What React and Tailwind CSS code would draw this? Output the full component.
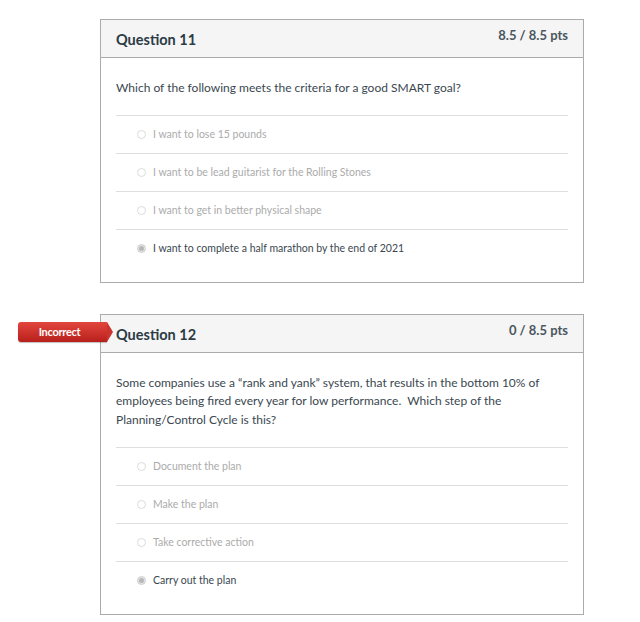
const questions = [
  {
    number: 11,
    score: '8.5 / 8.5 pts',
    text: ['Which of the following meets the criteria for a good SMART goal?'],
    answers: [
      'I want to lose 15 pounds',
      'I want to be lead guitarist for the Rolling Stones',
      'I want to get in better physical shape',
      'I want to complete a half marathon by the end of 2021',
    ],
    selected: 3,
    incorrect: false,
  },
  {
    number: 12,
    score: '0 / 8.5 pts',
    text: [
      'Some companies use a \u201crank and yank\u201d system, that results in the bottom 10% of',
      'employees being fired every year for low performance.\u00a0 Which step of the',
      'Planning/Control Cycle is this?',
    ],
    answers: ['Document the plan', 'Make the plan', 'Take corrective action', 'Carry out the plan'],
    selected: 3,
    incorrect: true,
  },
]

function Radio({ checked }) {
  return checked ? (
    <span className="w-[9px] h-[9px] rounded-full bg-[#e4e4e4] border border-[#d0d0d0] flex items-center justify-center flex-shrink-0">
      <span className="w-[5px] h-[5px] rounded-full bg-[#b8b8b8]" />
    </span>
  ) : (
    <span className="w-[9px] h-[9px] rounded-full border border-[#dcdcdc] bg-white flex-shrink-0" />
  )
}

function QuestionCard({ q }) {
  return (
    <div className="relative w-[484px] border border-[#ababab] bg-white">
      {q.incorrect && (
        <div className="absolute left-[-83px] top-[7px] flex items-center h-[20px]">
          <div className="w-[89px] h-[20px] rounded-l-[3px] bg-gradient-to-b from-[#e2453e] to-[#b91f1a] text-white text-[11px] font-bold tracking-[-0.3px] flex items-center justify-center pr-[6px] shadow-[0_1px_1px_rgba(0,0,0,0.25)]">
            Incorrect
          </div>
          <div className="w-0 h-0 border-y-[10px] border-y-transparent border-l-[6px] border-l-[#cc332d]" />
        </div>
      )}
      <div className="h-[38px] bg-[#f5f5f5] border-b border-[#ababab] flex justify-between pl-[15px] pr-[15px]">
        <span className="pt-[10px] text-[14.5px] font-bold text-[#2d3b45] leading-[20px]">Question {q.number}</span>
        <span className="pt-[6px] text-[13px] font-bold text-[#4b565e] leading-[18px]">{q.score}</span>
      </div>
      <div className="px-[15px] pt-[20.5px] pb-[15px]">
        <div className="text-[12px] leading-[18.5px] text-[#3a4750] pb-[18px]">
          {q.text.map((line) => (
            <div key={line}>{line}</div>
          ))}
        </div>
        {q.answers.map((a, i) => (
          <div key={a} className="h-[38px] border-t border-[#dedede] flex items-center gap-[7px] pl-[21px]">
            <Radio checked={i === q.selected} />
            <span className={`text-[10.5px] ${i === q.selected ? 'text-[#3a4750]' : 'text-[#ababab]'}`}>{a}</span>
          </div>
        ))}
      </div>
    </div>
  )
}

export default function App() {
  return (
    <div className="w-[640px] h-[622px] bg-white pt-[19px] pl-[100px] flex flex-col gap-[31px]" style={{ fontFamily: 'Lato, "Open Sans", sans-serif' }}>
      {questions.map((q) => (
        <QuestionCard key={q.number} q={q} />
      ))}
    </div>
  )
}
